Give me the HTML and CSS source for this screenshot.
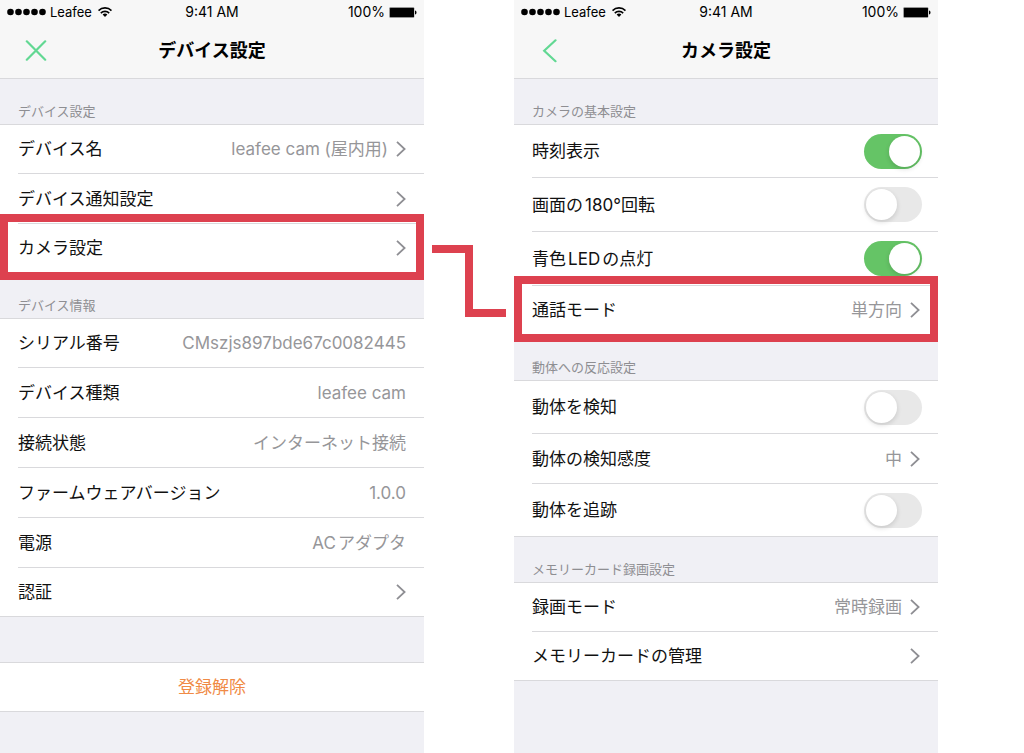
FILE: index.html
```html
<!DOCTYPE html>
<html lang="ja">
<head>
    <meta charset="UTF-8">
    <meta name="viewport" content="width=device-width, initial-scale=1.0">
    <title>デバイス設定</title>
    <link rel="stylesheet" href="styles.css">
</head>
<body>
    <!-- shared icons -->
    <svg class="sprite" aria-hidden="true">
        <symbol id="dots" viewBox="0 0 39 8">
            <circle cx="3.5" cy="4" r="3.3"/>
            <circle cx="11.5" cy="4" r="3.3"/>
            <circle cx="19.5" cy="4" r="3.3"/>
            <circle cx="27.5" cy="4" r="3.3"/>
            <circle cx="35.5" cy="4" r="3.3"/>
        </symbol>
        <symbol id="wifi" viewBox="0 0 14 10">
            <path d="M.5 3.6a9.2 9.2 0 0 1 13 0M2.8 6.1a6 6 0 0 1 8.4 0" fill="none" stroke="#000" stroke-width="1.6"/>
            <path d="M7 10 4.6 7.6a3.5 3.5 0 0 1 4.8 0z"/>
        </symbol>
        <symbol id="battery" viewBox="0 0 28 11">
            <rect x=".3" y=".3" width="25" height="10.4" rx="1" fill="#777"/>
            <rect x="1" y="1" width="24" height="9" rx=".5"/>
            <path d="M26 3.5c2 .3 2 3.7 0 4z"/>
        </symbol>
        <symbol id="chevron" viewBox="0 0 10 16">
            <path d="M1 .8 8.6 8 1 15.2" fill="none" stroke="#8e8e93" stroke-width="1.8"/>
        </symbol>
    </svg>

    <main class="flow">
        <section class="phone">
            <header class="top">
                <div class="status">
                    <div class="carrier">
                        <svg class="dots"><use href="#dots"/></svg>
                        <span>Leafee</span>
                        <svg class="wifi"><use href="#wifi"/></svg>
                    </div>
                    <span>9:41 AM</span>
                    <div class="power">
                        <span>100%</span>
                        <svg class="battery"><use href="#battery"/></svg>
                    </div>
                </div>
                <div class="nav">
                    <button class="nav-btn" type="button" aria-label="閉じる">
                        <svg width="22" height="22" viewBox="0 0 22 22"><path d="m1.8 1.3 18.4 18.4M20.2 1.3 1.8 19.7"/></svg>
                    </button>
                    <h1>デバイス設定</h1>
                </div>
            </header>

            <h2>デバイス設定</h2>
            <div class="list">
                <a class="row" href="#"><span>デバイス名</span><span class="value">leafee cam (屋内用)</span><svg class="chevron"><use href="#chevron"/></svg></a>
                <a class="row" href="#"><span>デバイス通知設定</span><svg class="chevron"><use href="#chevron"/></svg></a>
                <a class="row marked" href="#camera"><span>カメラ設定</span><svg class="chevron"><use href="#chevron"/></svg></a>
            </div>

            <h2>デバイス情報</h2>
            <div class="list">
                <div class="row"><span>シリアル番号</span><span class="value">CMszjs897bde67c0082445</span></div>
                <div class="row"><span>デバイス種類</span><span class="value">leafee cam</span></div>
                <div class="row"><span>接続状態</span><span class="value">インターネット接続</span></div>
                <div class="row"><span>ファームウェアバージョン</span><span class="value">1.0.0</span></div>
                <div class="row"><span>電源</span><span class="value">ACアダプタ</span></div>
                <a class="row" href="#"><span>認証</span><svg class="chevron"><use href="#chevron"/></svg></a>
            </div>

            <div class="list spaced">
                <button class="row danger" type="button">登録解除</button>
            </div>
        </section>

        <svg class="connector" viewBox="0 0 74 72" aria-hidden="true">
            <path d="M0 4h37v64h37"/>
        </svg>

        <section class="phone" id="camera">
            <header class="top">
                <div class="status">
                    <div class="carrier">
                        <svg class="dots"><use href="#dots"/></svg>
                        <span>Leafee</span>
                        <svg class="wifi"><use href="#wifi"/></svg>
                    </div>
                    <span>9:41 AM</span>
                    <div class="power">
                        <span>100%</span>
                        <svg class="battery"><use href="#battery"/></svg>
                    </div>
                </div>
                <div class="nav">
                    <button class="nav-btn" type="button" aria-label="戻る">
                        <svg width="22" height="24" viewBox="0 0 22 24"><path d="M16.5 1.3 5.2 11.8l11.3 10.4"/></svg>
                    </button>
                    <h1>カメラ設定</h1>
                </div>
            </header>

            <h2>カメラの基本設定</h2>
            <div class="list">
                <label class="row tall"><span>時刻表示</span><input class="switch" type="checkbox" checked></label>
                <label class="row tall"><span>画面の180°回転</span><input class="switch" type="checkbox"></label>
                <label class="row tall"><span>青色LEDの点灯</span><input class="switch" type="checkbox" checked></label>
                <a class="row marked" href="#"><span>通話モード</span><span class="value">単方向</span><svg class="chevron"><use href="#chevron"/></svg></a>
            </div>

            <h2>動体への反応設定</h2>
            <div class="list">
                <label class="row tall"><span>動体を検知</span><input class="switch" type="checkbox"></label>
                <a class="row" href="#"><span>動体の検知感度</span><span class="value">中</span><svg class="chevron"><use href="#chevron"/></svg></a>
                <label class="row tall"><span>動体を追跡</span><input class="switch" type="checkbox"></label>
            </div>

            <h2>メモリーカード録画設定</h2>
            <div class="list">
                <a class="row" href="#"><span>録画モード</span><span class="value">常時録画</span><svg class="chevron"><use href="#chevron"/></svg></a>
                <a class="row" href="#"><span>メモリーカードの管理</span><svg class="chevron"><use href="#chevron"/></svg></a>
            </div>
        </section>
    </main>
</body>
</html>
```
FILE: styles.css
```css
* {
    box-sizing: border-box;
}
body {
    margin: 0;
    background: #fff;
    color: #111;
    font-family: Inter, "Noto Sans CJK JP", sans-serif;
    font-size: 17px;
    line-height: 24px;
    text-autospace: normal;
}
.sprite {
    position: absolute;
    width: 0;
    height: 0;
}
.flow {
    display: grid;
    grid-template-columns: 424fr 90fr 424fr 86fr;
    min-height: 100vh;
}
.phone {
    min-width: 0;
    background: #f0f0f5;
}

/* status bar and title */
.top {
    background: #f7f7f7;
    border-bottom: 1px solid #d9d9dc;
    color: #000;
}
.status {
    display: grid;
    grid-template-columns: 1fr auto 1fr;
    align-items: center;
    height: 24px;
    padding: 0 7px;
    font-size: 14px;
}
.carrier, .power {
    display: flex;
    align-items: center;
    gap: 4px;
}
.carrier {
    font-size: 13px;
}
.power {
    justify-content: flex-end;
}
.dots {
    width: 39px;
    height: 8px;
}
.wifi {
    width: 14px;
    height: 10px;
    margin-left: 2px;
}
.battery {
    width: 28px;
    height: 11px;
}
.nav {
    display: grid;
    grid-template-columns: 60px 1fr 60px;
    align-items: center;
    height: 54px;
}
.nav-btn {
    display: flex;
    align-items: center;
    height: 44px;
    padding: 0 0 0 25px;
    border: none;
    background: none;
    cursor: pointer;
}
.nav-btn path {
    fill: none;
    stroke: #62d893;
    stroke-width: 2.2;
    stroke-linecap: round;
}
h1 {
    margin: 0;
    font-size: 18px;
    font-weight: bold;
    text-align: center;
}
h2 {
    height: 45px;
    margin: 0;
    padding: 22px 18px 0;
    color: #8e8e92;
    font-size: 13px;
    font-weight: normal;
    line-height: 20px;
}

/* setting rows */
.list {
    border-top: 1px solid #d9d9dc;
    background: #fff;
}
.spaced {
    margin-top: 45px;
}
.row {
    position: relative;
    display: flex;
    align-items: center;
    gap: 8px;
    height: 50px;
    margin-left: 18px;
    padding-right: 18px;
    border-bottom: 1px solid #d9d9dc;
    color: inherit;
    text-decoration: none;
}
.row:first-child, .row:last-child {
    height: 49px;
}
.row.tall {
    height: 54px;
    padding-right: 16px;
}
.row.tall:first-child, .row.tall:last-child {
    height: 53px;
}
.row:last-child {
    margin-left: 0;
    padding-left: 18px;
}
.value {
    margin-left: auto;
    color: #969699;
}
.chevron {
    flex: none;
    width: 10px;
    height: 16px;
}
.chevron:nth-child(2), .switch {
    margin: 0 0 0 auto;
}
.danger {
    justify-content: center;
    width: 100%;
    border-width: 0 0 1px;
    background: none;
    color: #f08a45;
    font: inherit;
    cursor: pointer;
}
.marked::after {
    content: "";
    position: absolute;
    z-index: 1;
    inset: -10px 0 -8px;
    border: 8px solid #dd414f;
    pointer-events: none;
}
.switch {
    appearance: none;
    display: flex;
    width: 58px;
    height: 35px;
    padding: 2px;
    border-radius: 18px;
    background: #e8e8e8;
}
.switch::before {
    content: "";
    width: 31px;
    height: 31px;
    border-radius: 50%;
    background: #fff;
    box-shadow: 0 2px 5px rgba(0, 0, 0, .14);
}
.switch:checked {
    justify-content: flex-end;
    background: #65c466;
}
.connector {
    justify-self: center;
    width: 74px;
    height: 72px;
    margin-top: 245px;
}
.connector path {
    fill: none;
    stroke: #dd414f;
    stroke-width: 8;
}
```
